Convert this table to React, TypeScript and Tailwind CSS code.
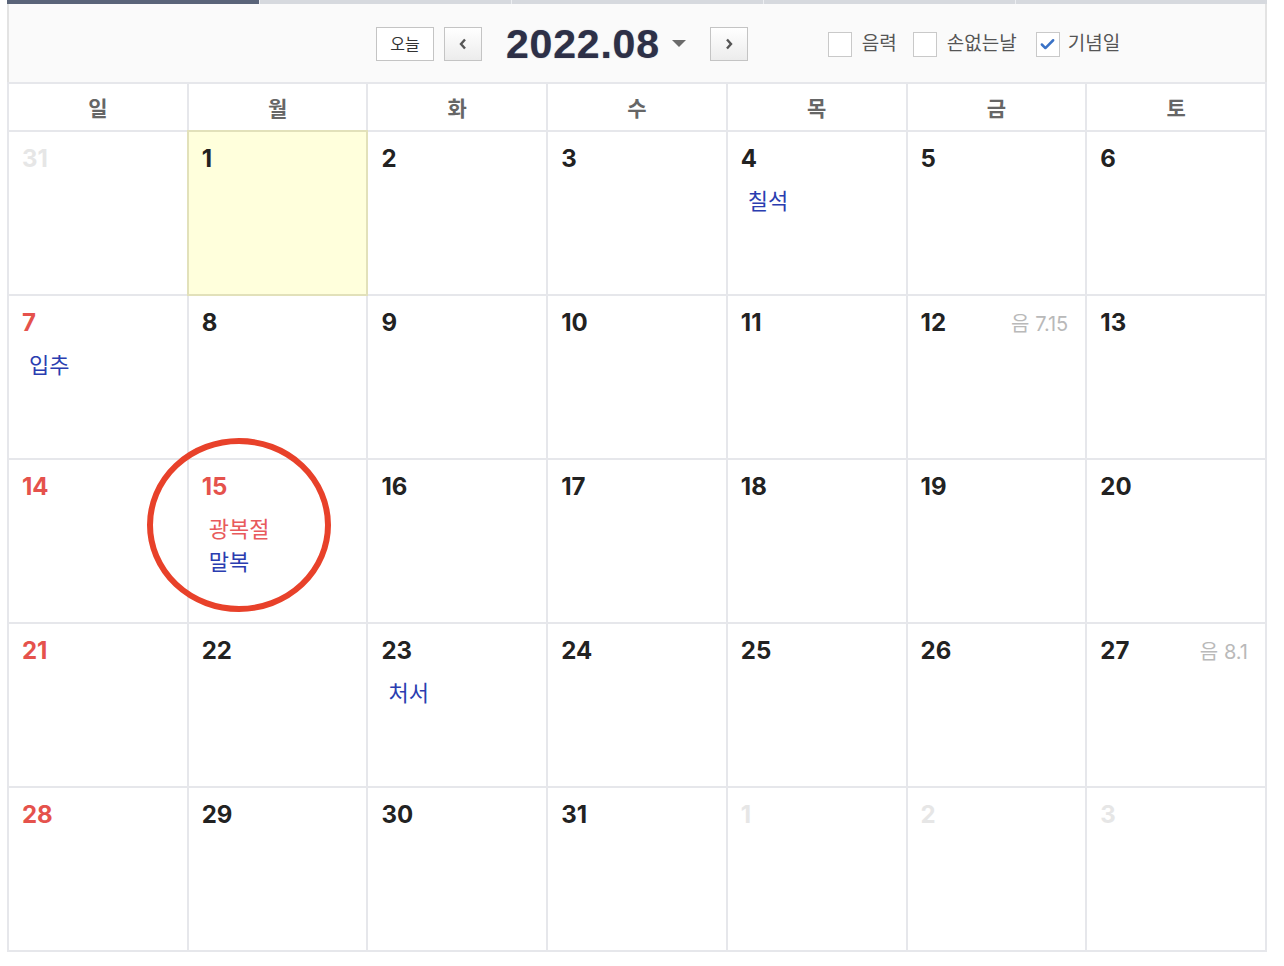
import { Check } from "lucide-react";

type Ev = { text: string; red?: boolean };
type Day = { d: number; red?: boolean; faded?: boolean; today?: boolean; lunar?: string; events?: Ev[] };

const weeks: Day[][] = [
  [
    { d: 31, faded: true },
    { d: 1, today: true },
    { d: 2 },
    { d: 3 },
    { d: 4, events: [{ text: "칠석" }] },
    { d: 5 },
    { d: 6 },
  ],
  [
    { d: 7, red: true, events: [{ text: "입추" }] },
    { d: 8 },
    { d: 9 },
    { d: 10 },
    { d: 11 },
    { d: 12, lunar: "7.15" },
    { d: 13 },
  ],
  [
    { d: 14, red: true },
    { d: 15, red: true, events: [{ text: "광복절", red: true }, { text: "말복" }] },
    { d: 16 },
    { d: 17 },
    { d: 18 },
    { d: 19 },
    { d: 20 },
  ],
  [
    { d: 21, red: true },
    { d: 22 },
    { d: 23, events: [{ text: "처서" }] },
    { d: 24 },
    { d: 25 },
    { d: 26 },
    { d: 27, lunar: "8.1" },
  ],
  [
    { d: 28, red: true },
    { d: 29 },
    { d: 30 },
    { d: 31 },
    { d: 1, faded: true },
    { d: 2, faded: true },
    { d: 3, faded: true },
  ],
];

const dayNames = ["일", "월", "화", "수", "목", "금", "토"];

function Chevron({ dir }: { dir: "left" | "right" }) {
  return (
    <svg width="8" height="12" viewBox="0 0 8 12">
      <path
        d={dir === "left" ? "M6 1.5 L2 6 L6 10.5" : "M2 1.5 L6 6 L2 10.5"}
        fill="none"
        stroke="#555"
        strokeWidth="2.4"
      />
    </svg>
  );
}

function Box({ checked }: { checked?: boolean }) {
  return (
    <span className="flex h-[25px] w-[24px] items-center justify-center border border-[#c9c9c9] bg-white">
      {checked && <Check className="h-[17px] w-[17px] text-[#3a72c6]" strokeWidth={3.5} />}
    </span>
  );
}

export default function App() {
  return (
    <div className="relative min-h-[966px] bg-white font-['Inter','Noto_Sans_CJK_KR',sans-serif]">
      <div className="ml-[7px] w-[1260px]">
        {/* tab strip */}
        <div className="flex h-[4px]">
          <div className="w-[252px] bg-[#5a6479]" />
          <div className="flex-1 border-l border-[#eceef1] bg-[#d6d9de]" />
          <div className="flex-1 border-l border-[#eceef1] bg-[#d6d9de]" />
          <div className="flex-1 border-l border-[#eceef1] bg-[#d6d9de]" />
          <div className="flex-1 border-l border-[#eceef1] bg-[#d6d9de]" />
        </div>

        {/* toolbar */}
        <div className="flex h-[78px] items-center border-x-2 border-[#e3e3e3] bg-[#fafafa] pl-[367px] pt-[2px]">
          <button className="flex h-[34px] w-[58px] items-center justify-center border border-[#c4c4c4] bg-white text-[16px] text-[#333]">
            오늘
          </button>
          <button className="ml-[10px] flex h-[34px] w-[38px] items-center justify-center border border-[#c4c4c4] bg-gradient-to-b from-white to-[#ececec]">
            <Chevron dir="left" />
          </button>
          <span className="ml-[24px] font-['Liberation_Sans',sans-serif] text-[41px] font-bold leading-none tracking-[0.8px] text-[#2d3047] [text-shadow:0_0_1px_rgba(45,48,71,0.5)]">
            2022.08
          </span>
          <svg className="ml-[12px]" width="14" height="8" viewBox="0 0 14 8">
            <path d="M0 0 L14 0 L7 7 Z" fill="#6b6b6b" />
          </svg>
          <button className="ml-[24px] flex h-[34px] w-[38px] items-center justify-center border border-[#c4c4c4] bg-gradient-to-b from-white to-[#ececec]">
            <Chevron dir="right" />
          </button>
          <div className="ml-[80px] flex items-center text-[19px] text-[#555]">
            <Box />
            <span className="ml-[10px]">음력</span>
            <span className="ml-[16px]">
              <Box />
            </span>
            <span className="ml-[10px]">손없는날</span>
            <span className="ml-[19px]">
              <Box checked />
            </span>
            <span className="ml-[8px]">기념일</span>
          </div>
        </div>

        {/* calendar grid */}
        <div className="grid grid-cols-7 grid-rows-[46px_repeat(5,162px)] gap-[2px] border-2 border-[#e6e7eb] bg-[#e6e7eb]">
          {dayNames.map((n) => (
            <div key={n} className="flex items-center justify-center bg-white pt-[3px] text-[21px] font-semibold text-[#666]">
              {n}
            </div>
          ))}
          {weeks.flat().map((day, i) => (
            <div
              key={i}
              className={
                day.today
                  ? "relative bg-[#ffffdc] outline-2 outline-[#e2e1ba]"
                  : "bg-white"
              }
            >
              <div className="flex items-baseline justify-between pl-[13px] pr-[17px] pt-[11px]">
                <span
                  className={
                    "text-[24px] font-bold leading-[32px] " +
                    (day.faded ? "text-[#e6e6e6]" : day.red ? "text-[#e5524c]" : "text-[#222]")
                  }
                >
                  {day.d}
                </span>
                {day.lunar && (
                  <span className="text-[20px] text-[#b9b9b9]">
                    음 {day.lunar}
                  </span>
                )}
              </div>
              {day.events && (
                <div className="mt-[10px] pl-[20px]">
                  {day.events.map((e) => (
                    <div
                      key={e.text}
                      className={"text-[22px] leading-[33px] " + (e.red ? "text-[#e85a5c]" : "text-[#2a3db0]")}
                    >
                      {e.text}
                    </div>
                  ))}
                </div>
              )}
            </div>
          ))}
        </div>
      </div>

      {/* red annotation circle */}
      <svg className="absolute left-[145px] top-[436px]" width="188" height="178" viewBox="0 0 188 178">
        <ellipse cx="94" cy="89" rx="89" ry="84" fill="none" stroke="#e8412a" strokeWidth="6" />
      </svg>
    </div>
  );
}
